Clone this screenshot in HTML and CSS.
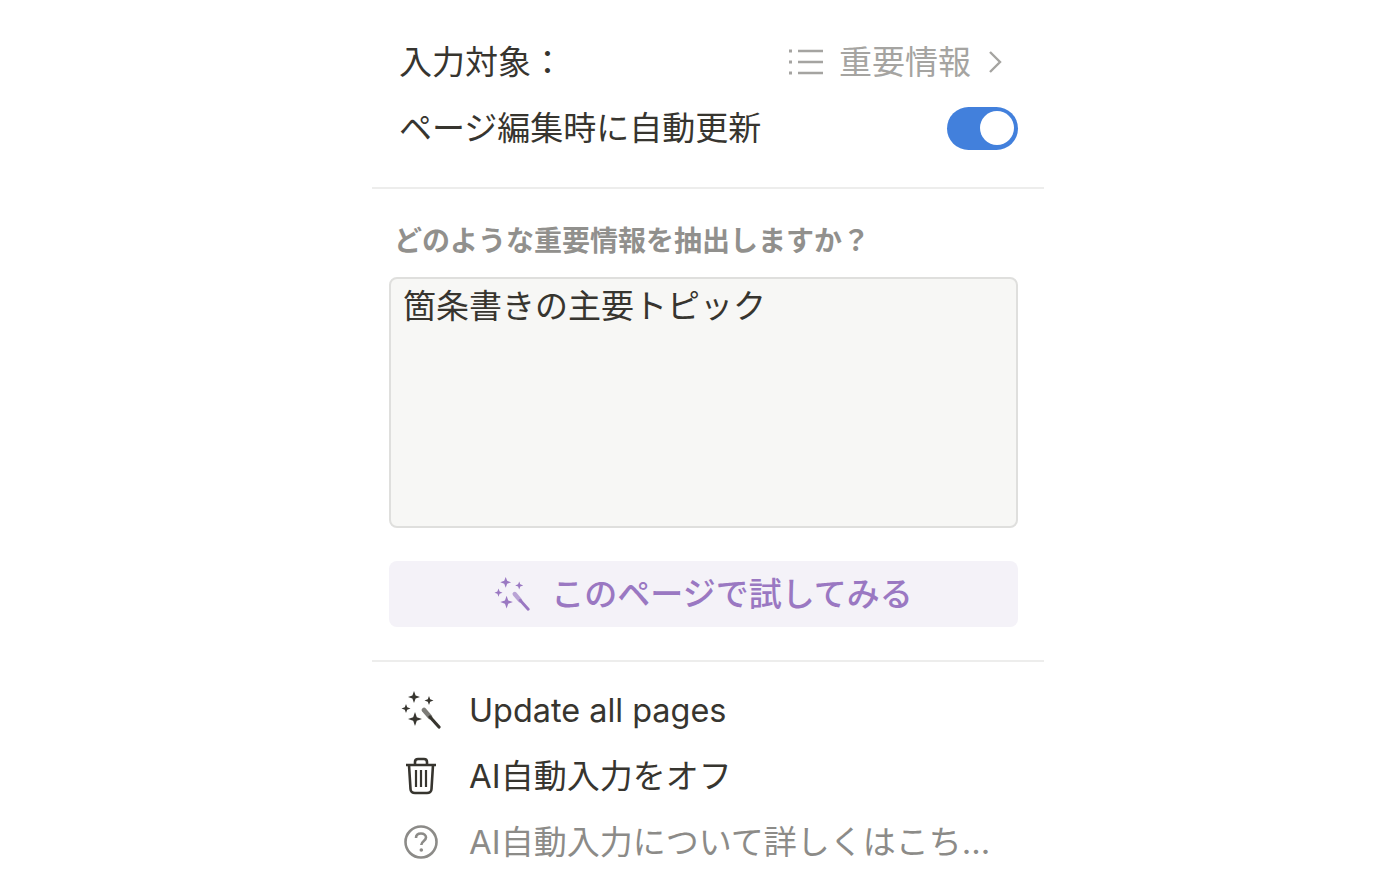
FILE: index.html
```html
<!DOCTYPE html>
<html lang="ja">
<head>
    <meta charset="UTF-8">
    <title>AI自動入力</title>
    <link rel="stylesheet" href="styles.css">
</head>
<body>
    <div class="panel">
        <div class="section top">
            <div class="row">
                <span class="row_text">入力対象：</span>
                <span class="target">
                    <svg class="list_icon" viewBox="0 0 36 28" fill="none" stroke="currentColor">
                        <path d="M10 3H35M10 14H35M10 25H35" stroke-width="2.4"/>
                        <path d="M1 3H4M1 14H4M1 25H4" stroke-width="3"/>
                    </svg>
                    <span class="target_name">重要情報</span>
                    <svg class="arrow" viewBox="0 0 14 24" fill="none" stroke="currentColor" stroke-width="2.4">
                        <path d="M2 2L12 12L2 22"/>
                    </svg>
                </span>
            </div>
            <div class="row">
                <span class="row_text">ページ編集時に自動更新</span>
                <span class="toggle"><span class="knob"></span></span>
            </div>
        </div>

        <div class="section middle">
            <div class="label">どのような重要情報を抽出しますか？</div>
            <div class="input">箇条書きの主要トピック</div>
            <div class="try_btn">
                <svg class="wand" viewBox="0 0 40 40">
                    <use href="#wand"/>
                </svg>
                <span class="row_text">このページで試してみる</span>
            </div>
        </div>

        <div class="section menu">
            <div class="item">
                <svg class="item_icon" viewBox="0 0 40 40">
                    <use href="#wand"/>
                </svg>
                <span class="latin">Update all pages</span>
            </div>
            <div class="item">
                <svg class="item_icon" viewBox="0 0 40 40" fill="none" stroke="currentColor" stroke-width="2.6">
                    <path d="M5 9H35M14 9V6C14 4 15 3 17 3H23C25 3 26 4 26 6V9"/>
                    <path d="M8 9L9.500 33C9.500 35.500 11.500 37 14 37H26C28.500 37 30.500 35.500 30.500 33L32 9"/>
                    <path d="M15 14V31M20 14V31M25 14V31" stroke-width="2.2"/>
                </svg>
                <span class="item_text">AI自動入力をオフ</span>
            </div>
            <div class="item help">
                <svg class="item_icon" viewBox="0 0 40 40" fill="none" stroke="currentColor" stroke-width="2.6">
                    <circle cx="20" cy="20" r="15.500"/>
                    <path d="M15 16C15 13 17 11.500 20 11.500C23 11.500 25 13.200 25 15.600C25 19 20.300 19 20.300 23"/>
                    <circle cx="20.300" cy="28" r="1.800" fill="currentColor" stroke="none"/>
                </svg>
                <span class="item_text">AI自動入力について詳しくはこち...</span>
            </div>
        </div>
    </div>

    <svg class="defs" width="0" height="0">
        <symbol id="wand" viewBox="0 0 40 40">
            <path fill="currentColor" d="M13 1L14.600 5.400L19 7L14.600 8.600L13 13L11.400 8.600L7 7L11.400 5.400ZM28 6L29.200 9.300L32.500 10.500L29.200 11.700L28 15L26.800 11.700L23.500 10.500L26.800 9.300ZM5 14L6.200 17.300L9.500 18.500L6.200 19.700L5 23L3.800 19.700L0.500 18.500L3.800 17.300ZM14 22L15.800 27.200L21 29L15.800 30.800L14 36L12.200 30.800L7 29L12.200 27.200Z"/>
            <path fill="none" stroke="currentColor" stroke-width="3.200" stroke-linecap="round" d="M29 27L38 37"/>
            <path fill="none" stroke="currentColor" stroke-width="4.800" stroke-opacity="0.650" stroke-linecap="round" d="M23 20L29 27"/>
        </symbol>
    </svg>
</body>
</html>
```

FILE: styles.css
```css
*{
    margin: 0;
    padding: 0;
    box-sizing: border-box;
}
body{
    background-color: #fff;
    font-family: "Inter", "Noto Sans CJK JP", sans-serif;
    font-size: 33px;
    color: #37352f;
}
.panel{
    width: 672px;
    margin-left: 372px;
}
.section{
    border-bottom: 2px solid #ededec;
}
.top{
    padding: 29px 26px 26px 27px;
}
.row{
    display: flex;
    align-items: center;
    justify-content: space-between;
    height: 66px;
}
.row_text{
    padding-bottom: 5px;
}
.target{
    display: flex;
    align-items: center;
    color: #a5a4a1;
    padding-right: 16px;
}
.list_icon{
    width: 36px;
    height: 28px;
    margin-right: 15px;
}
.target_name{
    margin-right: 17px;
    padding-bottom: 5px;
}
.arrow{
    width: 14px;
    height: 24px;
}
.toggle{
    display: flex;
    align-items: center;
    justify-content: flex-end;
    width: 71px;
    height: 43px;
    padding-right: 4px;
    border-radius: 22px;
    background-color: #4280dc;
}
.knob{
    width: 34px;
    height: 34px;
    border-radius: 50%;
    background-color: #fff;
}
.middle{
    padding: 34px 26px 33px 17px;
}
.label{
    padding-left: 5px;
    font-size: 28px;
    line-height: 36px;
    font-weight: 700;
    color: #91908d;
}
.input{
    height: 251px;
    margin-top: 18px;
    padding: 3px 12px;
    border: 2px solid #dfdfdd;
    border-radius: 8px;
    background-color: #f7f7f5;
    line-height: 48px;
}
.try_btn{
    display: flex;
    align-items: center;
    justify-content: center;
    height: 66px;
    margin-top: 33px;
    border-radius: 8px;
    background-color: #f4f2f8;
    color: #9a78c2;
    font-weight: 500;
}
.wand{
    width: 36px;
    height: 36px;
    margin-right: 21px;
}
.menu{
    border-bottom: none;
    padding: 15px 28px 0 29px;
}
.item{
    display: flex;
    align-items: center;
    height: 66px;
}
.item_icon{
    width: 40px;
    height: 40px;
    margin-right: 28px;
}
.item_text{
    padding-bottom: 4px;
}
.latin{
    font-size: 32.4px;
}
.help{
    color: #8c8b88;
}
.defs{
    position: absolute;
}
```
